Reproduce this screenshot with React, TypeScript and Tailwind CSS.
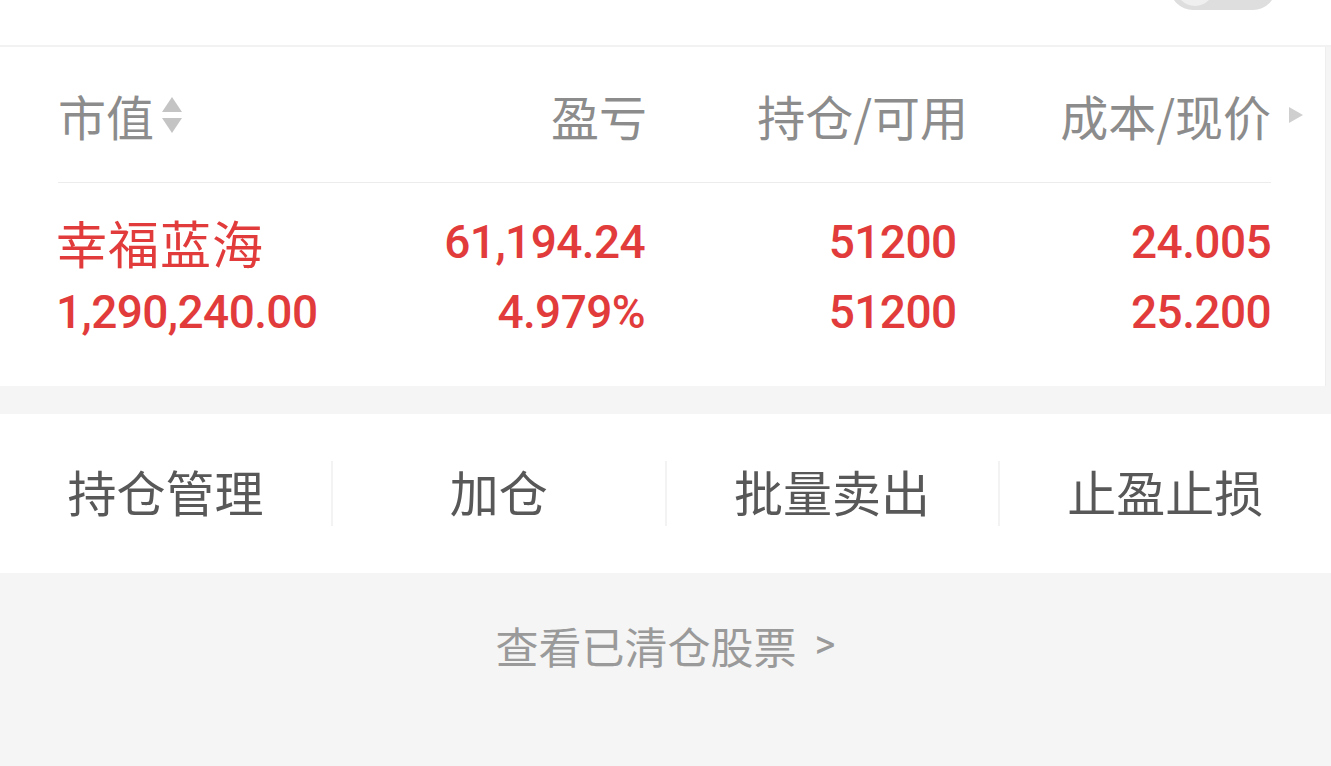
const CJK = "font-['Noto_Sans_CJK_SC','Noto_Sans',sans-serif]";
const NUM = "font-['Roboto','Noto_Sans_CJK_SC',sans-serif] font-medium text-[46px] tracking-[-0.6px]";

const SortIcon = () => (
  <svg width="24" height="40" viewBox="0 0 24 40" className="ml-[6px]">
    <path d="M12 2 L22 17 L2 17 Z" fill="#c4c4c4" />
    <path d="M2 23 L22 23 L12 38 Z" fill="#c4c4c4" />
  </svg>
);

const PlayIcon = () => (
  <svg width="16" height="18" viewBox="0 0 16 18">
    <path d="M1 1 L15 9 L1 17 Z" fill="#cfcfcf" />
  </svg>
);

const actions = ['持仓管理', '加仓', '批量卖出', '止盈止损'];

export default function App() {
  return (
    <div className={`w-[1331px] h-[766px] bg-[#f5f5f5] overflow-hidden ${CJK}`}>
      {/* bottom edge of the row above */}
      <div className="h-[45px] bg-white flex justify-end items-start overflow-hidden">
        <div className="-mt-[36px] mr-[55px] w-[106px] h-[46px] rounded-full bg-[#dedede] flex items-center px-[6px]">
          <div className="w-[38px] h-[38px] rounded-full bg-[#efefef]" />
        </div>
      </div>
      <div className="h-[2px] bg-[#f2f2f2]" />

      <div className="bg-white border-r border-[#eeeeee] mr-[5px]">
        {/* header */}
        <div className="h-[136px] ml-[58px] mr-[54px] flex items-center text-[48px] text-[#8c8c8c] border-b border-[#ececec]">
          <div className="w-[300px] flex items-center">
            <span>市值</span>
            <SortIcon />
          </div>
          <div className="w-[293px] text-right">盈亏</div>
          <div className="w-[323px] text-right">持仓/可用</div>
          <div className="w-[305px] text-right relative">
            成本/现价
            <span className="absolute -right-[33px] top-1/2 -translate-y-1/2 flex">
              <PlayIcon />
            </span>
          </div>
        </div>

        {/* data */}
        <div className="ml-[56px] mr-[54px] pt-[24px] pb-[39px] flex text-[#e23b3b] leading-[70px]">
          <div className="w-[300px]">
            <div className="text-[51px] tracking-[1px]">幸福蓝海</div>
            <div className={NUM}>1,290,240.00</div>
          </div>
          <div className={`w-[290px] text-right ${NUM}`}>
            <div>61,194.24</div>
            <div>4.979%</div>
          </div>
          <div className={`w-[312px] text-right ${NUM}`}>
            <div>51200</div>
            <div>51200</div>
          </div>
          <div className={`w-[315px] text-right ${NUM}`}>
            <div>24.005</div>
            <div>25.200</div>
          </div>
        </div>
      </div>

      <div className="h-[28px]" />

      {/* actions */}
      <div className="h-[159px] bg-white flex items-center">
        {actions.map((a, i) => (
          <div
            key={a}
            className={`flex-1 h-[65px] flex items-center justify-center ${i > 0 ? 'border-l-2 border-[#f3f3f3]' : ''}`}
          >
            <span className="text-[49px] leading-none text-[#585858] pb-[6px]">{a}</span>
          </div>
        ))}
      </div>

      {/* footer link */}
      <div className="pt-[47px] flex justify-center">
        <div className="text-[43px] text-[#9a9a9a] leading-[50px] flex items-center gap-[18px]">
          <span>查看已清仓股票</span>
          <span className="font-['Roboto',sans-serif] text-[40px]">&gt;</span>
        </div>
      </div>
    </div>
  );
}
